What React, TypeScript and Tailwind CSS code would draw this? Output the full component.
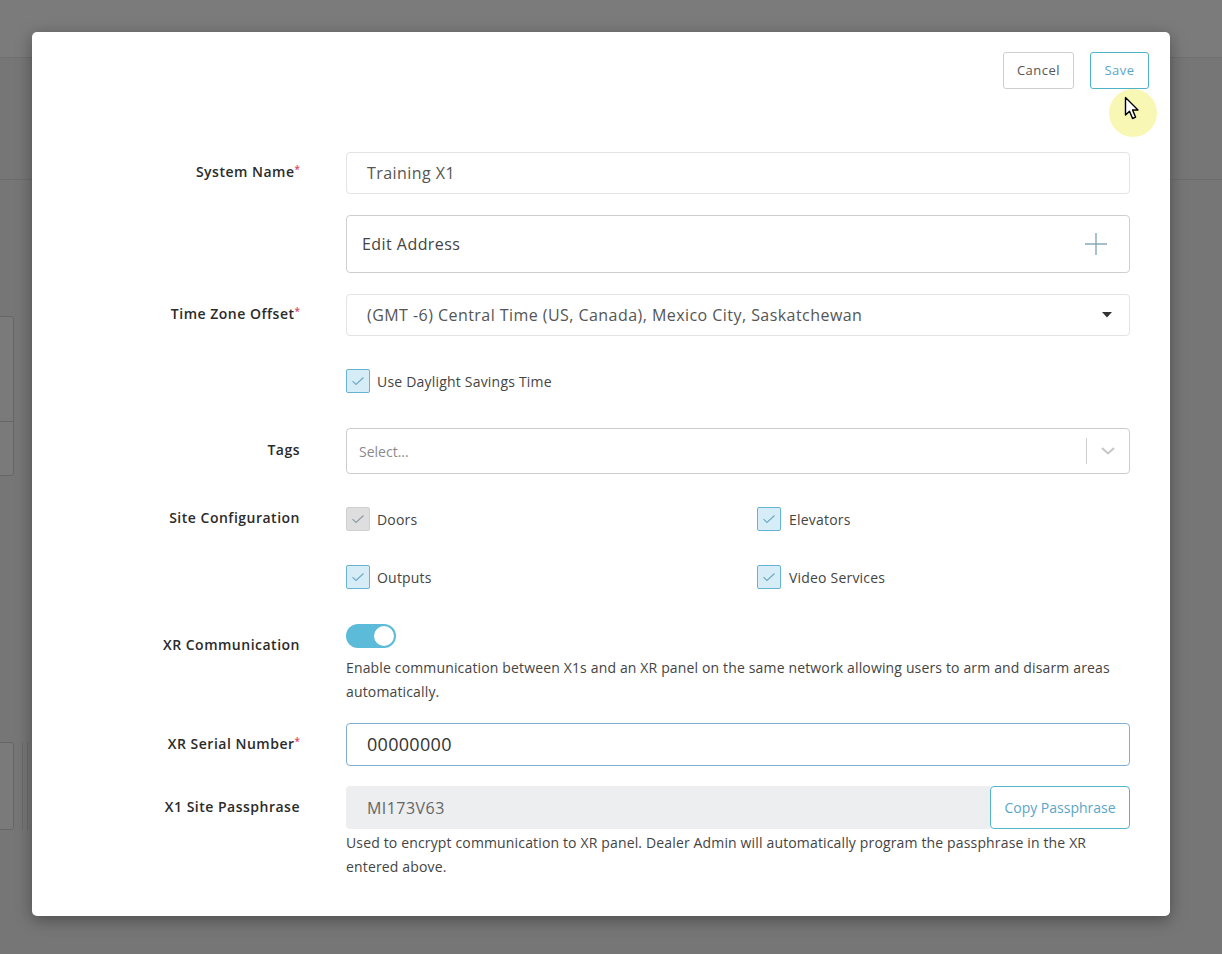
import React from "react";

const font = { fontFamily: '"Open Sans", "Noto Sans", sans-serif' };

function Check({ gray = false }: { gray?: boolean }) {
  return (
    <span
      className={
        "flex h-[24px] w-[24px] shrink-0 items-center justify-center rounded-[2px] border " +
        (gray ? "border-[#d0d0d0] bg-[#dedede]" : "border-[#64b5d3] bg-[#d6edf7]")
      }
    >
      <svg width="14" height="10" viewBox="0 0 14 10" fill="none">
        <path d="M1.5 5.2 L5 8.5 L12.5 1.5" stroke={gray ? "#8c9aa0" : "#6aa9c2"} strokeWidth="1.1" />
      </svg>
    </span>
  );
}

function Label({ children, req = false, pt = "pt-[9px]" }: { children: React.ReactNode; req?: boolean; pt?: string }) {
  return (
    <div className={"w-[268px] shrink-0 text-right text-[14px] font-semibold tracking-[0.5px] text-[#2b2b2b] " + pt}>
      {children}
      {req && <span className="relative -top-[4px] text-[10px] tracking-normal text-[#e0446a]">*</span>}
    </div>
  );
}

export default function App() {
  return (
    <div className="relative h-[954px] w-[1222px] overflow-hidden bg-[#767676]" style={font}>
      {/* faint page behind overlay */}
      <div className="absolute left-0 top-0 h-[58px] w-full border-b border-[#6f6f6f] bg-[#7b7b7b]" />
      <div className="absolute left-0 top-[179px] h-px w-full bg-[#6d6d6d]" />
      <div className="absolute left-[-4px] top-[316px] h-[160px] w-[18px] rounded-[3px] border border-[#666] bg-[#7a7a7a]">
        <div className="mt-[104px] h-px w-full bg-[#666]" />
      </div>
      <div className="absolute left-[-4px] top-[742px] h-[88px] w-[18px] rounded-[3px] border border-[#666] bg-[#7a7a7a]" />
      <div className="absolute left-[22px] top-[742px] h-[88px] w-[6px] border-x border-[#6a6a6a]" />

      {/* modal */}
      <div className="absolute left-[32px] top-[32px] h-[884px] w-[1138px] rounded-[5px] bg-white shadow-[0_4px_16px_rgba(0,0,0,0.35)]">
        <div className="flex justify-end gap-[16px] pr-[21px] pt-[20px]">
          <button className="h-[37px] w-[71px] rounded-[3px] border border-[#cfcfcf] text-[13px] tracking-[0.5px] text-[#555]">Cancel</button>
          <button className="h-[37px] w-[59px] rounded-[3px] border border-[#4fb3c6] text-[13px] tracking-[0.5px] text-[#5aa6c8]">Save</button>
        </div>

        {/* row: system name */}
        <div className="mt-[63px] flex gap-[46px]">
          <Label req>System Name</Label>
          <div className="flex h-[42px] w-[784px] items-center rounded-[4px] border border-[#e3e3e3] pl-[20px] text-[16px] tracking-[0.45px] text-[#555]">
            Training X1
          </div>
        </div>

        {/* edit address */}
        <div className="mt-[21px] flex gap-[46px]">
          <div className="w-[268px] shrink-0" />
          <div className="flex h-[58px] w-[784px] items-center justify-between rounded-[4px] border border-[#cfcfcf] pl-[15px] pr-[21px] text-[16px] tracking-[0.45px] text-[#444]">
            <span>Edit Address</span>
            <svg width="24" height="24" viewBox="0 0 24 24">
              <path d="M12 1 V23 M1 12 H23" stroke="#86aab6" strokeWidth="1.4" />
            </svg>
          </div>
        </div>

        {/* time zone */}
        <div className="mt-[21px] flex gap-[46px]">
          <Label req>Time Zone Offset</Label>
          <div className="flex h-[42px] w-[784px] items-center justify-between rounded-[4px] border border-[#e3e3e3] pl-[20px] pr-[17px] text-[16px] tracking-[0.45px] text-[#555]">
            <span>(GMT -6) Central Time (US, Canada), Mexico City, Saskatchewan</span>
            <svg width="10" height="6" viewBox="0 0 10 6">
              <path d="M0 0 H10 L5 5.5 Z" fill="#333" />
            </svg>
          </div>
        </div>

        {/* daylight */}
        <div className="mt-[33px] flex gap-[46px]">
          <div className="w-[268px] shrink-0" />
          <label className="flex items-center gap-[7px] text-[14px] tracking-[0.2px] text-[#444]">
            <Check />
            Use Daylight Savings Time
          </label>
        </div>

        {/* tags */}
        <div className="mt-[35px] flex gap-[46px]">
          <Label pt="pt-[11px]">Tags</Label>
          <div className="flex h-[46px] w-[784px] items-center justify-between rounded-[4px] border border-[#cccccc] pl-[12px] text-[14px] text-[#8a8a8a]">
            <span>Select...</span>
            <div className="flex items-center">
              <span className="h-[26px] w-px bg-[#cccccc]" />
              <svg className="mx-[14px]" width="14" height="8" viewBox="0 0 14 8" fill="none">
                <path d="M1 1 L7 6.5 L13 1" stroke="#c6c6c6" strokeWidth="2" />
              </svg>
            </div>
          </div>
        </div>

        {/* site configuration */}
        <div className="mt-[33px] flex gap-[46px]">
          <Label pt="pt-[0px]">Site Configuration</Label>
          <div className="grid w-[784px] grid-cols-2 gap-y-[34px] text-[14px] tracking-[0.2px] text-[#444]">
            <label className="flex items-center gap-[7px]">
              <Check gray />
              Doors
            </label>
            <label className="flex items-center gap-[8px] pl-[19px]">
              <Check />
              Elevators
            </label>
            <label className="flex items-center gap-[7px]">
              <Check />
              Outputs
            </label>
            <label className="flex items-center gap-[8px] pl-[19px]">
              <Check />
              Video Services
            </label>
          </div>
        </div>

        {/* XR communication */}
        <div className="mt-[35px] flex gap-[46px]">
          <Label pt="pt-[10px]">XR Communication</Label>
          <div className="w-[784px]">
            <div className="flex h-[24px] w-[50px] items-center justify-end rounded-full bg-[#5bbbd9] pr-[2px]">
              <span className="h-[20px] w-[20px] rounded-full bg-white" />
            </div>
            <p className="mt-[8px] text-[14px] leading-[24px] tracking-[0.15px] text-[#444]">
              Enable communication between X1s and an XR panel on the same network allowing users to arm and disarm areas automatically.
            </p>
          </div>
        </div>

        {/* serial */}
        <div className="mt-[19px] flex gap-[46px]">
          <Label req pt="pt-[10px]">XR Serial Number</Label>
          <div className="flex h-[43px] w-[784px] items-center rounded-[4px] border border-[#7fb0d4] pl-[20px] text-[18px] tracking-[0.3px] text-[#333]">
            00000000
          </div>
        </div>

        {/* passphrase */}
        <div className="mt-[20px] flex gap-[46px]">
          <Label pt="pt-[10px]">X1 Site Passphrase</Label>
          <div className="w-[784px]">
            <div className="flex h-[43px]">
              <div className="flex flex-1 items-center rounded-l-[4px] bg-[#eceeef] pl-[21px] text-[16px] tracking-[0.45px] text-[#666]">MI173V63</div>
              <button className="h-[43px] w-[140px] rounded-[4px] border border-[#52b4c8] text-[14px] text-[#5aa6c8]">
                Copy Passphrase
              </button>
            </div>
            <p className="mt-[2px] text-[14px] leading-[24px] tracking-[0.15px] text-[#444]">
              Used to encrypt communication to XR panel. Dealer Admin will automatically program the passphrase in the XR entered above.
            </p>
          </div>
        </div>
      </div>

      {/* cursor highlight */}
      <div className="absolute left-[1109px] top-[89px] h-[48px] w-[48px] rounded-full bg-[#f8f8b4]" />
      <svg className="absolute left-[1124px] top-[96px]" width="18" height="26" viewBox="0 0 18 26">
        <path
          d="M1.5 1.5 L1.5 19 L5.5 15.2 L8.6 22.5 L11.6 21.2 L8.6 14 L14 14 Z"
          fill="white"
          stroke="black"
          strokeWidth="1.4"
          strokeLinejoin="round"
        />
      </svg>
    </div>
  );
}
